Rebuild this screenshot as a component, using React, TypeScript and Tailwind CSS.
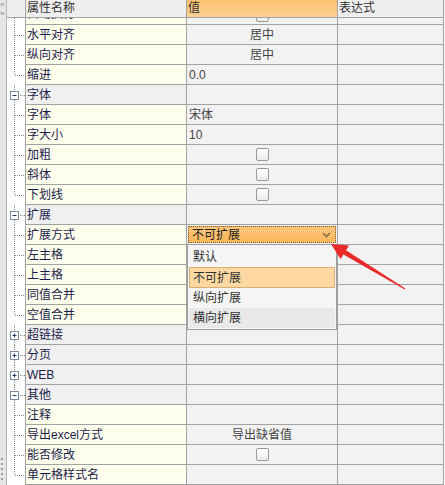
import React from "react";

type Row = {
    kind: "leaf" | "group";
    name: string;
    open?: boolean;
    last?: boolean;
    value?: { type: "center" | "left" | "check" | "select"; text?: string };
};

const rows: Row[] = [
    { kind: "leaf", name: "水平对齐", value: { type: "center", text: "居中" } },
    { kind: "leaf", name: "纵向对齐", value: { type: "center", text: "居中" } },
    { kind: "leaf", name: "缩进", last: true, value: { type: "left", text: "0.0" } },
    { kind: "group", name: "字体", open: true },
    { kind: "leaf", name: "字体", value: { type: "left", text: "宋体" } },
    { kind: "leaf", name: "字大小", value: { type: "left", text: "10" } },
    { kind: "leaf", name: "加粗", value: { type: "check" } },
    { kind: "leaf", name: "斜体", value: { type: "check" } },
    { kind: "leaf", name: "下划线", last: true, value: { type: "check" } },
    { kind: "group", name: "扩展", open: true },
    { kind: "leaf", name: "扩展方式", value: { type: "select", text: "不可扩展" } },
    { kind: "leaf", name: "左主格" },
    { kind: "leaf", name: "上主格" },
    { kind: "leaf", name: "同值合并" },
    { kind: "leaf", name: "空值合并", last: true },
    { kind: "group", name: "超链接" },
    { kind: "group", name: "分页" },
    { kind: "group", name: "WEB" },
    { kind: "group", name: "其他", open: true },
    { kind: "leaf", name: "注释" },
    { kind: "leaf", name: "导出excel方式", value: { type: "center", text: "导出缺省值" } },
    { kind: "leaf", name: "能否修改", value: { type: "check" } },
    { kind: "leaf", name: "单元格样式名", last: true },
];

const Check = () => (
    <div className="w-[13px] h-[13px] rounded-[2px] border border-[#9a9a9a] bg-gradient-to-b from-white to-[#ececec]" />
);

const TreeCell = ({ row }: { row: Row }) => {
    const dot = { stroke: "#8a8a8a", strokeDasharray: "1 1", strokeWidth: 1 };
    return (
        <svg width="18" height="20" className="block">
            {row.kind === "leaf" ? (
                <>
                    <line x1="7.5" y1="0" x2="7.5" y2={row.last ? 10.5 : 20} {...dot} />
                    <line x1="8" y1="10.5" x2="18" y2="10.5" {...dot} />
                </>
            ) : (
                <>
                    <line x1="7.5" y1="0" x2="7.5" y2="6" {...dot} />
                    <line x1="7.5" y1="15" x2="7.5" y2="20" {...dot} />
                    <line x1="13" y1="10.5" x2="18" y2="10.5" {...dot} />
                    <rect x="3.5" y="6.5" width="8" height="8" fill="white" stroke="#7b8ca6" />
                    <line x1="5.5" y1="10.5" x2="9.5" y2="10.5" stroke="#243a6a" />
                    {!row.open && <line x1="7.5" y1="8.5" x2="7.5" y2="12.5" stroke="#243a6a" />}
                </>
            )}
        </svg>
    );
};

const ValueCell = ({ row }: { row: Row }) => {
    const v = row.value;
    if (!v) return null;
    if (v.type === "center") return <div className="w-full text-center text-[#444]">{v.text}</div>;
    if (v.type === "left") return <div className="w-full pl-[2px] text-[#444]">{v.text}</div>;
    if (v.type === "check")
        return (
            <div className="w-full flex justify-center">
                <Check />
            </div>
        );
    return (
        <div className="w-full px-[1px]">
            <div className="h-[17px] flex items-center justify-between border border-dotted border-[#6e5a3c] bg-gradient-to-b from-[#fcc57a] to-[#fbb659] pl-[3px] pr-[4px] text-[#222]">
                <span>{v.text}</span>
                <svg width="9" height="6" viewBox="0 0 9 6">
                    <path d="M1 1 L4.5 4.5 L8 1" fill="none" stroke="#8a6f4c" strokeWidth="1.6" />
                </svg>
            </div>
        </div>
    );
};

export default function App() {
    return (
        <div className="relative w-[445px] h-[485px] overflow-hidden bg-white flex text-[12px] leading-[14px] font-['Liberation_Sans','Noto_Sans_CJK_SC',sans-serif]">
            {/* left splitter gutter */}
            <div className="relative w-[7px] h-full bg-[#e6e6e6] border-r border-[#b5b5b5]">
                <div className="absolute left-0 top-[1px] text-[8px] leading-[8px] text-[#8a8a8a]">«</div>
                <div className="absolute left-0 top-[10px] text-[8px] leading-[8px] text-[#8a8a8a]">»</div>
                <div className="absolute left-[1px] top-[458px] flex flex-col gap-[3px]">
                    {[0, 1, 2, 3, 4].map((i) => (
                        <div key={i} className="w-[2px] h-[2px] bg-[#9a9a9a]" />
                    ))}
                </div>
            </div>

            <div className="flex flex-col w-[437px]">
                {/* header */}
                <div className="grid grid-cols-[18px_161px_151px_107px] h-[18px] border-b border-[#a3a3a3] bg-[#efefef] text-[#333]">
                    <div />
                    <div className="border-l border-[#a3a3a3] pl-[1px] pt-[1px]">属性名称</div>
                    <div className="border-l border-[#a3a3a3] bg-gradient-to-b from-[#fbc070] to-[#fdd095] pl-[1px] pt-[1px]">值</div>
                    <div className="border-l border-r border-[#a3a3a3] pl-[1px] pt-[1px]">表达式</div>
                </div>

                {/* partially scrolled row */}
                <div className="grid grid-cols-[18px_161px_151px_107px] h-[7px]">
                    <div className="bg-white">
                        <svg width="18" height="7" className="block">
                            <line x1="7.5" y1="0" x2="7.5" y2="7" stroke="#8a8a8a" strokeDasharray="1 1" />
                        </svg>
                    </div>
                    <div className="border-l border-b border-[#a3a3a3] bg-[#ffffee] overflow-hidden">
                        <div className="-mt-[11px] pl-[1px] text-[#1c1c4c]">自动换行</div>
                    </div>
                    <div className="border-l border-b border-[#a3a3a3] bg-[#f2f2f2] overflow-hidden flex justify-center">
                        <div className="-mt-[9px]">
                            <Check />
                        </div>
                    </div>
                    <div className="border-l border-r border-b border-[#a3a3a3] bg-[#f2f2f2]" />
                </div>

                {rows.map((row, i) => (
                    <div key={i} className="grid grid-cols-[18px_161px_151px_107px] h-[20px]">
                        <div className="bg-white">
                            <TreeCell row={row} />
                        </div>
                        <div
                            className={`border-l border-b border-[#a3a3a3] pl-[1px] flex items-center text-[#1c1c4c] ${
                                row.kind === "group" ? "bg-[#f0f0f0]" : "bg-[#ffffee]"
                            }`}
                        >
                            {row.name}
                        </div>
                        <div className="border-l border-b border-[#a3a3a3] bg-[#f2f2f2] flex items-center">
                            <ValueCell row={row} />
                        </div>
                        <div className="border-l border-r border-b border-[#a3a3a3] bg-[#f2f2f2]" />
                    </div>
                ))}
            </div>

            {/* dropdown list of 扩展方式 */}
            <div className="absolute left-[187px] top-[244px] w-[150px] h-[86px] border border-[#9c9c9c] bg-[#f5f5f5] flex flex-col px-[1px] pt-[1px] text-[#333]">
                <div className="h-[21px] flex items-center pl-[4px]">默认</div>
                <div className="h-[21px] flex items-center pl-[3px] bg-[#fdd8a2] border border-[#d9ad74]">不可扩展</div>
                <div className="h-[20px] flex items-center pl-[4px]">纵向扩展</div>
                <div className="h-[20px] flex items-center pl-[4px] bg-[#e9e9e9]">横向扩展</div>
            </div>

            {/* red annotation arrow */}
            <svg className="absolute inset-0 pointer-events-none" width="445" height="485">
                <polygon
                    points="331,244 349,245.5 346,250.2 405.3,288.6 404.7,289.4 343.4,254.4 340.5,259.1"
                    fill="#ea2a2a"
                />
            </svg>
        </div>
    );
}
